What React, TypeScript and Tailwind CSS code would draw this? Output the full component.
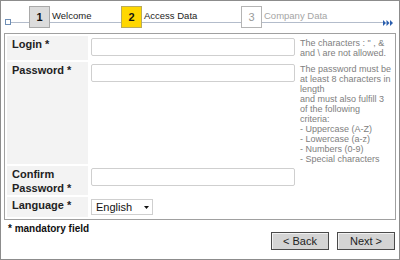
import React from 'react';

const font = { fontFamily: '"Liberation Sans", Arial, sans-serif' };

const StepBox = ({ n, state }: { n: number; state: 'done' | 'active' | 'todo' }) => {
  const cls =
    state === 'done'
      ? 'bg-[#dcdcdc] border-[#a9a9a9] text-[#111] font-bold'
      : state === 'active'
      ? 'bg-[#ffd700] border-[#b9ab5a] text-[#111] font-bold'
      : 'bg-white border-[#b4b4b4] text-[#9a9a9a]';
  return (
    <div className={`w-[21px] h-[22px] border flex items-center justify-center text-[11px] ${cls}`}>
      {n}
    </div>
  );
};

const Arrows = () => (
  <svg width="10" height="6" viewBox="0 0 10 6">
    <polygon points="0,0 3,3 0,6" fill="#2b5fae" />
    <polygon points="3.5,0 6.5,3 3.5,6" fill="#2b5fae" />
    <polygon points="7,0 10,3 7,6" fill="#2b5fae" />
  </svg>
);

const Label = ({ children }: { children: React.ReactNode }) => (
  <div className="bg-[#f3f3f3] px-[5px] pt-[2px] text-[11px] leading-[13.6px] font-bold text-[#222]">
    {children}
  </div>
);

const Input = () => (
  <div className="h-[18px] w-[204px] border border-[#cfcfcf] rounded-[2px] bg-white" />
);

const Hint = ({ lines }: { lines: string[] }) => (
  <div className="pt-[2px] pl-[2px] text-[9px] leading-[10px] text-[#808080] whitespace-nowrap">
    {lines.map((l, i) => (
      <div key={i}>{l}</div>
    ))}
  </div>
);

export default function App() {
  return (
    <div style={font} className="w-[400px] h-[260px] border border-[#8c8c8c] bg-white overflow-hidden">
      {/* wizard steps */}
      <div className="relative h-[32px] pt-[5px] pl-[28px] flex">
        <div className="absolute top-[21px] left-[9px] right-[16px] h-px bg-[#b3bccb]" />
        <div className="absolute top-[18px] left-[4px] w-[6px] h-[6px] border border-[#6f8fb6] bg-white" />
        <div className="absolute top-[19px] left-[382px]">
          <Arrows />
        </div>
        <div className="relative w-[92px] flex items-start">
          <StepBox n={1} state="done" />
          <span className="ml-[2px] mt-[4px] text-[9.5px] leading-[12px] text-[#222]">Welcome</span>
        </div>
        <div className="relative w-[120px] flex items-start">
          <StepBox n={2} state="active" />
          <span className="ml-[2px] mt-[4px] text-[9.5px] leading-[12px] text-[#222]">Access Data</span>
        </div>
        <div className="relative flex items-start">
          <StepBox n={3} state="todo" />
          <span className="ml-[2px] mt-[4px] text-[9.5px] leading-[12px] text-[#a5a5a5]">Company Data</span>
        </div>
      </div>

      {/* form */}
      <div className="ml-[3px] w-[392px] border border-[#a0a0a0] p-[2px] grid grid-cols-[81px_206px_95px] gap-[2px]">
        <Label>Login *</Label>
        <div className="pt-[2px] pb-[4px] pl-[1px]">
          <Input />
        </div>
        <Hint lines={['The characters : " , &', 'and \\ are not allowed.']} />

        <Label>Password *</Label>
        <div className="pt-[2px] pl-[1px]">
          <Input />
        </div>
        <Hint
          lines={[
            'The password must be',
            'at least 8 characters in',
            'length',
            'and must also fulfill 3',
            'of the following',
            'criteria:',
            '- Uppercase (A-Z)',
            '- Lowercase (a-z)',
            '- Numbers (0-9)',
            '- Special characters',
          ]}
        />

        <div className="bg-[#f3f3f3] px-[5px] pt-[2px] text-[11px] leading-[13.6px] font-bold text-[#222]">
          Confirm
          <br />
          Password *
        </div>
        <div className="pt-[2px] pl-[1px]">
          <Input />
        </div>
        <div />

        <Label>Language *</Label>
        <div className="pt-[2px] pb-[2px] pl-[1px]">
          <div className="h-[16px] w-[62px] border border-[#cfcfcf] bg-white flex items-center pl-[4px] pr-[2px] justify-between text-[11px] text-[#111]">
            <span>English</span>
            <svg width="5" height="3" viewBox="0 0 5 3" className="mr-[1px]">
              <polygon points="0,0 5,0 2.5,3" fill="#111" />
            </svg>
          </div>
        </div>
        <div />
      </div>

      {/* footer */}
      <div className="flex justify-between items-start">
        <div className="ml-[7px] mt-[3px] text-[10px] leading-[12px] font-bold text-[#111]">* mandatory field</div>
        <div className="mr-[4px] mt-[12px] flex gap-[8px]">
          <button className="w-[58px] h-[18px] border border-[#4a4a4a] bg-[#d4d4d4] shadow-[inset_1px_1px_0_#f2f2f2] text-[11px] leading-none text-[#222]">
            &lt; Back
          </button>
          <button className="w-[58px] h-[18px] border border-[#4a4a4a] bg-[#d4d4d4] shadow-[inset_1px_1px_0_#f2f2f2] text-[11px] leading-none text-[#222]">
            Next &gt;
          </button>
        </div>
      </div>
    </div>
  );
}
